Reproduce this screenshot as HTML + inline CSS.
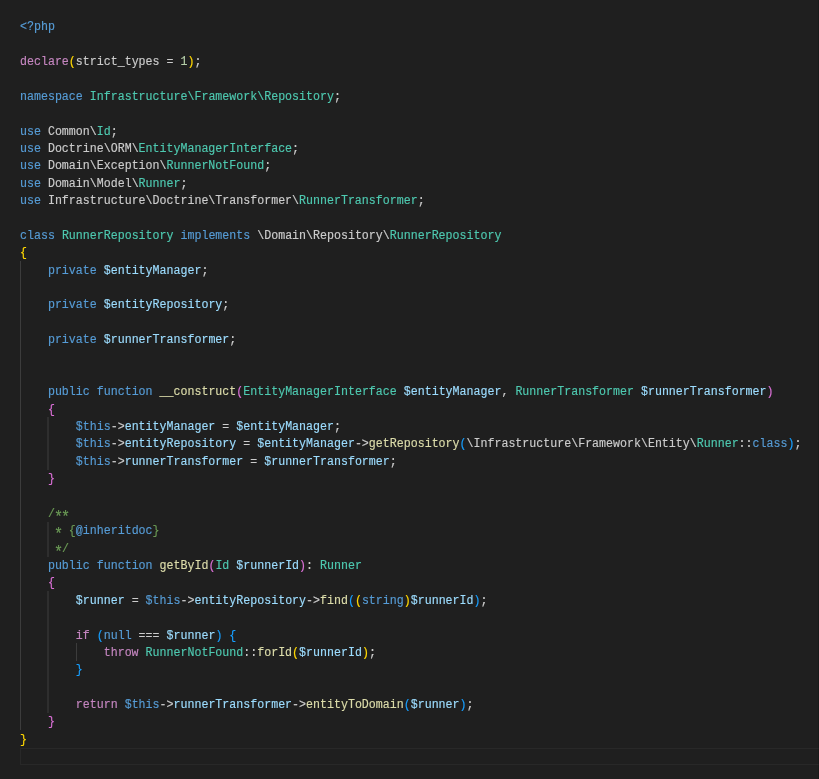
<!DOCTYPE html>
<html><head><meta charset="utf-8"><style>
html,body{margin:0;padding:0;background:#1f1f1f;width:819px;height:779px;overflow:hidden}
#ed{will-change:transform;position:absolute;left:20px;top:17px;padding-top:1.48px;font-family:"Liberation Mono",monospace;font-size:11.633px;color:#cccccc;}
.l{white-space:pre;transform:scaleY(1.07);transform-origin:0 8.4px;-webkit-text-stroke:0.15px currentColor}
.l{height:17.38px;line-height:17.38px}
.g{position:absolute;width:1px;background:#3c3c3c}
.ast{display:inline-block;transform:translateY(3px) scale(1.3)}
#edge{position:absolute;left:818px;top:0;width:1px;height:779px;background:rgba(0,0,0,0.15)}
#cur{position:absolute;left:20px;top:748.00px;width:801px;height:15px;border:1px solid #282828}
.k{color:#569cd6}.c{color:#c586c0}.f{color:#dcdcaa}.t{color:#4ec9b0}.v{color:#9cdcfe}.n{color:#b5cea8}.m{color:#6a9955}
.b1{color:#ffd700}.b2{color:#da70d6}.b3{color:#179fff}
</style></head><body>
<div class="g" style="left:20px;top:261px;height:469px"></div><div class="g" style="left:47px;width:2px;background:#2e2e2e;top:417px;height:53px"></div><div class="g" style="left:47px;width:2px;background:#2e2e2e;top:522px;height:35px"></div><div class="g" style="left:47px;width:2px;background:#2e2e2e;top:591px;height:122px"></div><div class="g" style="left:76px;top:643px;height:18px"></div>
<div id="cur"></div><div id="edge"></div>
<div id="ed">
<div class="l"><span class="k">&lt;?php</span></div>
<div class="l"></div>
<div class="l"><span class="c">declare</span><span class="b1">(</span>strict_types = <span class="n">1</span><span class="b1">)</span>;</div>
<div class="l"></div>
<div class="l"><span class="k">namespace</span> <span class="t">Infrastructure\Framework\Repository</span>;</div>
<div class="l"></div>
<div class="l"><span class="k">use</span> Common\<span class="t">Id</span>;</div>
<div class="l"><span class="k">use</span> Doctrine\ORM\<span class="t">EntityManagerInterface</span>;</div>
<div class="l"><span class="k">use</span> Domain\Exception\<span class="t">RunnerNotFound</span>;</div>
<div class="l"><span class="k">use</span> Domain\Model\<span class="t">Runner</span>;</div>
<div class="l"><span class="k">use</span> Infrastructure\Doctrine\Transformer\<span class="t">RunnerTransformer</span>;</div>
<div class="l"></div>
<div class="l"><span class="k">class</span> <span class="t">RunnerRepository</span> <span class="k">implements</span> \Domain\Repository\<span class="t">RunnerRepository</span></div>
<div class="l"><span class="b1">{</span></div>
<div class="l">    <span class="k">private</span> <span class="v">$entityManager</span>;</div>
<div class="l"></div>
<div class="l">    <span class="k">private</span> <span class="v">$entityRepository</span>;</div>
<div class="l"></div>
<div class="l">    <span class="k">private</span> <span class="v">$runnerTransformer</span>;</div>
<div class="l"></div>
<div class="l"></div>
<div class="l">    <span class="k">public</span> <span class="k">function</span> <span class="f">__construct</span><span class="b2">(</span><span class="t">EntityManagerInterface</span> <span class="v">$entityManager</span>, <span class="t">RunnerTransformer</span> <span class="v">$runnerTransformer</span><span class="b2">)</span></div>
<div class="l">    <span class="b2">{</span></div>
<div class="l">        <span class="k">$this</span>-&gt;<span class="v">entityManager</span> = <span class="v">$entityManager</span>;</div>
<div class="l">        <span class="k">$this</span>-&gt;<span class="v">entityRepository</span> = <span class="v">$entityManager</span>-&gt;<span class="f">getRepository</span><span class="b3">(</span>\Infrastructure\Framework\Entity\<span class="t">Runner</span>::<span class="k">class</span><span class="b3">)</span>;</div>
<div class="l">        <span class="k">$this</span>-&gt;<span class="v">runnerTransformer</span> = <span class="v">$runnerTransformer</span>;</div>
<div class="l">    <span class="b2">}</span></div>
<div class="l"></div>
<div class="l">    <span class="m">/<span class="ast">*</span><span class="ast">*</span></span></div>
<div class="l">     <span class="m"><span class="ast">*</span> {</span><span class="k">@inheritdoc</span><span class="m">}</span></div>
<div class="l">     <span class="m"><span class="ast">*</span>/</span></div>
<div class="l">    <span class="k">public</span> <span class="k">function</span> <span class="f">getById</span><span class="b2">(</span><span class="t">Id</span> <span class="v">$runnerId</span><span class="b2">)</span>: <span class="t">Runner</span></div>
<div class="l">    <span class="b2">{</span></div>
<div class="l">        <span class="v">$runner</span> = <span class="k">$this</span>-&gt;<span class="v">entityRepository</span>-&gt;<span class="f">find</span><span class="b3">(</span><span class="b1">(</span><span class="k">string</span><span class="b1">)</span><span class="v">$runnerId</span><span class="b3">)</span>;</div>
<div class="l"></div>
<div class="l">        <span class="c">if</span> <span class="b3">(</span><span class="k">null</span> === <span class="v">$runner</span><span class="b3">)</span> <span class="b3">{</span></div>
<div class="l">            <span class="c">throw</span> <span class="t">RunnerNotFound</span>::<span class="f">forId</span><span class="b1">(</span><span class="v">$runnerId</span><span class="b1">)</span>;</div>
<div class="l">        <span class="b3">}</span></div>
<div class="l"></div>
<div class="l">        <span class="c">return</span> <span class="k">$this</span>-&gt;<span class="v">runnerTransformer</span>-&gt;<span class="f">entityToDomain</span><span class="b3">(</span><span class="v">$runner</span><span class="b3">)</span>;</div>
<div class="l">    <span class="b2">}</span></div>
<div class="l"><span class="b1">}</span></div>
</div>
</body></html>
